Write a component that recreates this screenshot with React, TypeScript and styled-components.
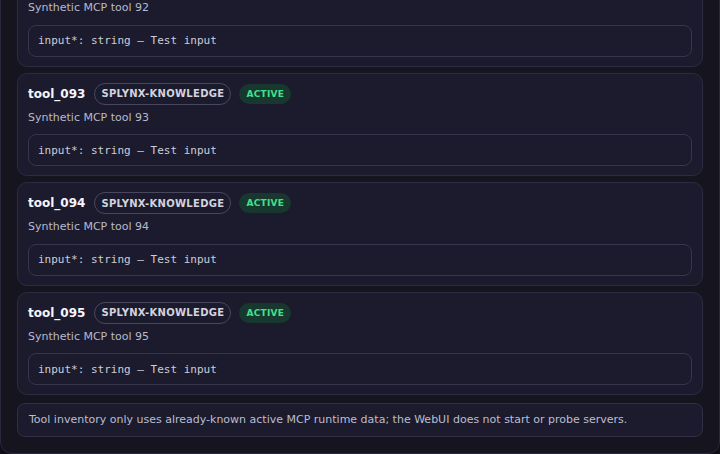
import React from "react";
import styled, { createGlobalStyle } from "styled-components";

const SANS = `"DejaVu Sans", "Noto Sans", sans-serif`;
const MONO = `"DejaVu Sans Mono", "Liberation Mono", monospace`;

const GlobalStyle = createGlobalStyle`
  html, body {
    margin: 0;
    padding: 0;
    background: #100f18;
  }
  * { box-sizing: border-box; }
`;

const Viewport = styled.div`
  height: 454px;
  width: 720px;
  overflow: hidden;
  display: flex;
  flex-direction: column;
  justify-content: flex-end;
`;

const Panel = styled.section`
  flex-shrink: 0;
  background: #15141f;
  border: 1px solid #29283c;
  border-radius: 12px;
  padding: 16px;
  display: flex;
  flex-direction: column;
  gap: 8px;
  font-family: ${SANS};
`;

const ToolList = styled.div`
  display: flex;
  flex-direction: column;
  gap: 6px;
`;

const ToolCard = styled.article`
  background: #1b1b2d;
  border: 1px solid #2c2b41;
  border-radius: 10px;
  padding: 9px 10px;
`;

const Header = styled.div`
  display: flex;
  align-items: center;
  gap: 8px;
  height: 22px;
`;

const ToolName = styled.span`
  font-size: 12px;
  font-weight: 700;
  color: #f6f5fb;
  margin-right: 1px;
`;

const Pill = styled.span<{ $tone: "server" | "active" }>`
  display: inline-flex;
  align-items: center;
  height: ${(p) => (p.$tone === "server" ? "22px" : "20px")};
  padding: 0 ${(p) => (p.$tone === "server" ? "6px" : "7px")};
  border-radius: 999px;
  font-size: ${(p) => (p.$tone === "server" ? "10px" : "9px")};
  font-weight: 700;
  letter-spacing: 0.03em;
  text-transform: uppercase;
  color: ${(p) => (p.$tone === "server" ? "#d3d3df" : "#41e08b")};
  background: ${(p) => (p.$tone === "server" ? "transparent" : "#17372f")};
  border: ${(p) => (p.$tone === "server" ? "1px solid #48475e" : "none")};
`;

const Description = styled.p`
  margin: 5px 0 0;
  font-size: 11px;
  line-height: 1.5;
  color: #b9b9cb;
`;

const Schema = styled.div`
  margin-top: 8px;
  height: 32px;
  display: flex;
  align-items: center;
  padding: 0 9px;
  border: 1px solid #36354b;
  border-radius: 8px;
  font-family: ${MONO};
  font-size: 11px;
  color: #cdcdd9;
  white-space: pre;
`;

const Note = styled.div`
  border: 1px solid #2f2e44;
  border-radius: 8px;
  background: #1b1b2d;
  padding: 8px 11px;
  font-size: 11px;
  line-height: 16px;
  color: #bcbdd0;
`;

type Tool = { id: string; server: string; status: string; description: string; schema: string };

const tools: Tool[] = [90, 91, 92, 93, 94, 95].map((n) => ({
  id: `tool_0${n}`,
  server: "splynx-knowledge",
  status: "active",
  description: `Synthetic MCP tool ${n}`,
  schema: "input*: string — Test input",
}));

export default function App() {
  return (
    <>
      <GlobalStyle />
      <Viewport>
        <Panel>
          <ToolList>
            {tools.map((t) => (
              <ToolCard key={t.id}>
                <Header>
                  <ToolName>{t.id}</ToolName>
                  <Pill $tone="server">{t.server}</Pill>
                  <Pill $tone="active">{t.status}</Pill>
                </Header>
                <Description>{t.description}</Description>
                <Schema>{t.schema}</Schema>
              </ToolCard>
            ))}
          </ToolList>
          <Note>
            Tool inventory only uses already-known active MCP runtime data; the WebUI does not start or probe servers.
          </Note>
        </Panel>
      </Viewport>
    </>
  );
}
